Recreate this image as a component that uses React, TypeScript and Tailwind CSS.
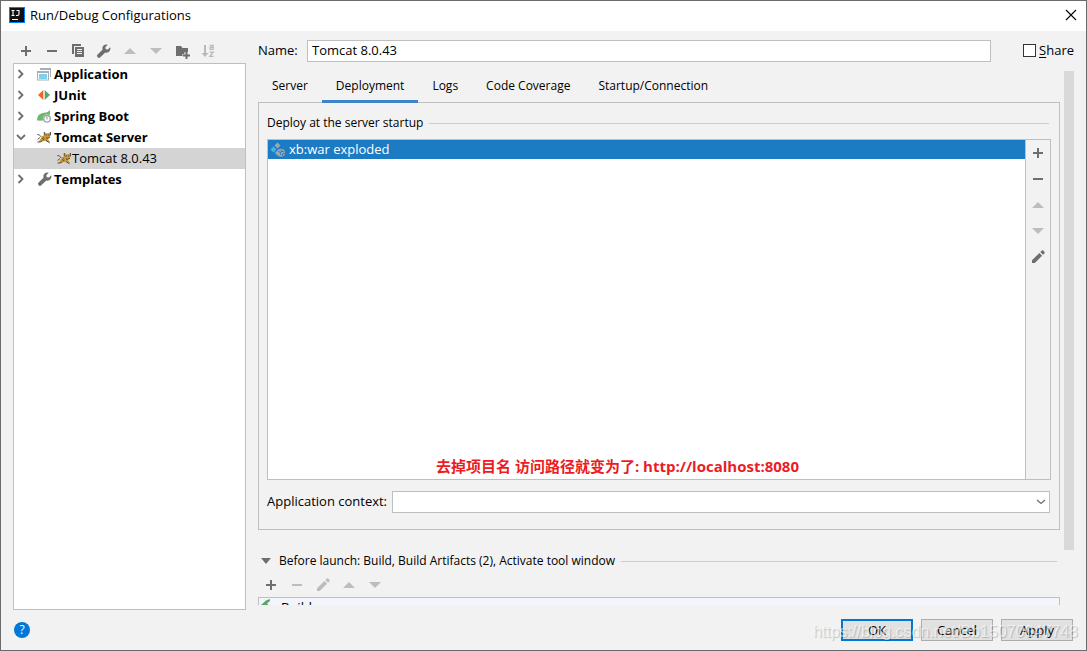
import type { ReactNode } from "react";

type IconProps = { className?: string };

function PlusIcon({ className = "text-[#6e6e6e]" }: IconProps) {
  return (
    <svg width="16" height="16" viewBox="0 0 16 16" className={className} fill="currentColor" aria-hidden="true">
      <path d="M7 3h2v4h4v2H9v4H7V9H3V7h4z" />
    </svg>
  );
}

function MinusIcon({ className = "text-[#6e6e6e]" }: IconProps) {
  return (
    <svg width="16" height="16" viewBox="0 0 16 16" className={className} fill="currentColor" aria-hidden="true">
      <path d="M3 7h10v2H3z" />
    </svg>
  );
}

function CopyIcon() {
  return (
    <svg width="16" height="16" viewBox="0 0 16 16" fill="#6e6e6e" aria-hidden="true">
      <path d="M2 1h9v2H4v8H2z" />
      <path fillRule="evenodd" d="M5 4h9v10H5zM7 6v1h5V6zm0 2v1h5V8zm0 2v1h5v-1z" />
    </svg>
  );
}

function WrenchIcon() {
  return (
    <svg width="16" height="16" viewBox="0 0 16 16" fill="#6e6e6e" aria-hidden="true">
      <path d="M14.300 4.200 11.800 6.600 9.700 6.200 9.300 4.200 11.700 1.700A4 4 0 0 0 6.500 6.700L1.600 11.600a1.900 1.900 0 0 0 2.700 2.700L9.300 9.400a4 4 0 0 0 5-5.200z" />
    </svg>
  );
}

function UpIcon({ className = "text-[#bdbdbd]" }: IconProps) {
  return (
    <svg width="16" height="16" viewBox="0 0 16 16" className={className} fill="currentColor" aria-hidden="true">
      <path d="M8 5 14 11H2z" />
    </svg>
  );
}

function DownIcon({ className = "text-[#bdbdbd]" }: IconProps) {
  return (
    <svg width="16" height="16" viewBox="0 0 16 16" className={className} fill="currentColor" aria-hidden="true">
      <path d="M8 11 14 5H2z" />
    </svg>
  );
}

function FolderPlusIcon() {
  return (
    <svg width="16" height="16" viewBox="0 0 16 16" fill="#6e6e6e" aria-hidden="true">
      <path d="M2 3h5l1.500 2H14v4h-3.500v2H8.500v2H2z" />
      <path d="M11.500 9h2v2.500H16v2h-2.500V16h-2v-2.500H9v-2h2.500z" />
    </svg>
  );
}

function SortIcon() {
  return (
    <svg width="16" height="16" viewBox="0 0 16 16" aria-hidden="true">
      <path d="M4 2h2v8h2.500L5 14 1.500 10H4z" fill="#b9b9b9" />
      <path d="M9.800 2.500h3.300v4.300M13.100 4.400h-2.900v2h2.900M9.600 9.200h3.500l-3.200 4.200h3.700" fill="none" stroke="#b9b9b9" strokeWidth="1.300" />
    </svg>
  );
}

function PencilIcon({ className = "text-[#6e6e6e]" }: IconProps) {
  return (
    <svg width="16" height="16" viewBox="0 0 16 16" className={className} fill="currentColor" aria-hidden="true">
      <path d="M2 11.200 9.400 4l2.700 2.700L4.800 14H2z" />
      <path d="m10.300 3.100 1.500-1.500q.7-.6 1.400 0l1.300 1.300q.6.700 0 1.400L13 5.800z" />
    </svg>
  );
}

function ChevronIcon({ open = false }: { open?: boolean }) {
  return (
    <svg width="10" height="10" viewBox="0 0 10 10" fill="none" stroke="#6e6e6e" strokeWidth="1.800" aria-hidden="true">
      <path d={open ? "M1 3l4 4 4-4" : "M2.500 1l4 4-4 4"} />
    </svg>
  );
}

function ApplicationIcon() {
  return (
    <svg width="14" height="14" viewBox="0 0 14 14" aria-hidden="true">
      <path d="M3 1h11v9h-1V3H3z" fill="#a5afb8" />
      <path fillRule="evenodd" d="M0 4h12v9.500H0zM1 6v6.500h10V6z" fill="#a5afb8" />
      <path d="M2 7h8v5H2z" fill="#7fd0ea" />
    </svg>
  );
}

function JUnitIcon() {
  return (
    <svg width="14" height="14" viewBox="0 0 14 14" aria-hidden="true">
      <path d="M6.300 2v10L1 7z" fill="#f26522" />
      <path d="M7.700 2v10L13 7z" fill="#59a869" />
    </svg>
  );
}

function SpringIcon() {
  return (
    <svg width="14" height="14" viewBox="0 0 14 14" aria-hidden="true">
      <path d="M12.500 1c.8 2.600.9 4.600-.7 7-2 3.200-6 4.200-11.800 3.600C0 7.500 1.500 5 5 4.200c3-.7 5.500-.2 7.500-3.200z" fill="#6cb86a" />
      <circle cx="10" cy="9.800" r="4.200" fill="#fff" />
      <circle cx="10" cy="9.800" r="3.300" fill="none" stroke="#9aa7b0" strokeWidth="1.400" />
      <path d="M10 7.500v3" stroke="#9aa7b0" strokeWidth="1.200" />
    </svg>
  );
}

function TomcatIcon() {
  return (
    <svg width="14" height="14" viewBox="0 0 14 14" aria-hidden="true">
      <path d="M7.300 2 9 3.200h2.500L13.300 2l.3 3.200-.9 2.300-1.600.8.400 2 1.700 1.500-1 .8-3-1.700-3.800.4L3.500 12H1.500l1.900-3L5 6.300l2.500-1z" fill="#c99a38" />
      <path d="M7.300 2v3.300M13.500 2v3.300M.3 4.600l2 .2 2 2.200M.5 12h2.700l2-1M9 10.500l3.500 2.300M.5 9.500l2.500-2M9 7.800l2 .5 2-1" fill="none" stroke="#4a4638" strokeWidth=".9" />
      <path d="M8.700 4.500h1v1h-1zM11.300 4.500h1v1h-1z" fill="#493b12" />
      <path d="M5.200 8.500 7 7.500M5.500 10l2-1" stroke="#6b5017" strokeWidth=".9" />
    </svg>
  );
}

function ArtifactIcon() {
  return (
    <svg width="16" height="16" viewBox="0 0 16 16" aria-hidden="true">
      <path d="m7.500.5 3 3-3 3-3-3z" fill="#9aa7b0" />
      <path d="m3.500 4.500 3 3-3 3-3-3z" fill="#40b6e0" />
      <path d="m7.500 8.300 1 1-.5 4.500-3.200-2.700z" fill="#9aa7b0" />
      <circle cx="11" cy="10.800" r="4" fill="#9aa7b0" />
      <path d="m8.300 9.500 2.500 1-.5 2.500M11.500 7.700l-.5 1.500 3 .6M12.300 14l.2-2 2-.6" fill="none" stroke="#1b7bc3" strokeWidth=".9" />
    </svg>
  );
}

function IdeaIcon() {
  return (
    <svg width="16" height="16" viewBox="0 0 16 16" aria-hidden="true">
      <path d="M0 0h16v16H0z" fill="#087cfa" />
      <path d="M1 1h14v14H1z" fill="#111" />
      <path d="M2.500 3.500h3M4 3.500v5M2.500 8.500h3M7.500 3.500h2.500v3.500q0 1.500-1.500 1.500h-1.500M3 12.500h6" fill="none" stroke="#fff" strokeWidth="1.100" />
    </svg>
  );
}

function ToolButton({ label, disabled, children }: { label: string; disabled?: boolean; children: ReactNode }) {
  return (
    <button type="button" aria-label={label} disabled={disabled} className="flex h-6 w-[26px] shrink-0 items-center justify-center">
      {children}
    </button>
  );
}

function TreeItem({ label, icon, open }: { label: string; icon: ReactNode; open?: boolean }) {
  return (
    <button type="button" aria-expanded={!!open} className="flex h-[21px] w-full items-center pb-0.5 pl-[2px] text-left text-[13px] font-bold">
      <ChevronIcon open={open} />
      <span className="ml-[11px] flex w-[17px] shrink-0">{icon}</span>
      <span>{label}</span>
    </button>
  );
}

function GroupTitle({ children }: { children: ReactNode }) {
  return (
    <div className="flex items-center gap-1.5 text-[12px] leading-4">
      <span className="whitespace-nowrap">{children}</span>
      <span className="h-px flex-1 bg-[#cdcdcd]" />
    </div>
  );
}

const tabs = ["Server", "Deployment", "Logs", "Code Coverage", "Startup/Connection"];

function Tabs() {
  return (
    <div role="tablist" className="relative -mb-px flex h-8 shrink-0 items-stretch text-[12px]">
      {tabs.map((tab) => (
        <button
          key={tab}
          type="button"
          role="tab"
          aria-selected={tab === "Deployment"}
          className={
            tab === "Deployment"
              ? "border-b-3 border-[#4083c9] px-3.5"
              : "border-b-3 border-transparent px-3.5"
          }
        >
          {tab}
        </button>
      ))}
    </div>
  );
}

function Sidebar() {
  return (
    <aside className="flex w-[233px] shrink-0 flex-col">
      <div className="flex h-8 items-end">
        <ToolButton label="Add"><PlusIcon /></ToolButton>
        <ToolButton label="Remove"><MinusIcon /></ToolButton>
        <ToolButton label="Copy"><CopyIcon /></ToolButton>
        <ToolButton label="Edit templates"><WrenchIcon /></ToolButton>
        <ToolButton label="Move up" disabled><UpIcon /></ToolButton>
        <ToolButton label="Move down" disabled><DownIcon /></ToolButton>
        <ToolButton label="Create folder"><FolderPlusIcon /></ToolButton>
        <ToolButton label="Sort" disabled><SortIcon /></ToolButton>
      </div>
      <div className="flex-1 border border-[#bfbfc3] bg-white">
        <TreeItem label="Application" icon={<ApplicationIcon />} />
        <TreeItem label="JUnit" icon={<JUnitIcon />} />
        <TreeItem label="Spring Boot" icon={<SpringIcon />} />
        <TreeItem label="Tomcat Server" icon={<TomcatIcon />} open />
        <button type="button" className="flex h-[21px] w-full items-center bg-[#d4d4d4] pb-0.5 pl-[43px] text-left">
          <TomcatIcon />
          <span className="ml-px">Tomcat 8.0.43</span>
        </button>
        <TreeItem label="Templates" icon={<WrenchIcon />} />
      </div>
    </aside>
  );
}

function DeploymentPanel() {
  return (
    <section className="border border-[#bfbfbf] px-2 pt-3 pb-4">
      <div className="pr-0.5">
        <GroupTitle>Deploy at the server startup</GroupTitle>
      </div>
      <div className="mt-2 flex h-[341px] border border-[#bfbfbf]">
        <div className="flex min-w-0 flex-1 flex-col justify-between bg-white">
          <button type="button" className="flex h-[19px] w-full items-center gap-[3px] bg-[#1b7bc3] pl-[2px] text-left leading-4 text-white">
            <ArtifactIcon />
            <span className="pb-px">xb:war exploded</span>
          </button>
          <p className="mb-0.5 pr-[58px] text-center text-[15px] leading-[22px] font-bold text-[#ed1c24]">
            去掉项目名 访问路径就变为了: http://localhost:8080
          </p>
        </div>
        <div className="flex w-[25px] flex-col items-center gap-0.5 border-l border-[#bfbfbf] pt-px">
          <ToolButton label="Add artifact"><PlusIcon /></ToolButton>
          <ToolButton label="Remove artifact"><MinusIcon /></ToolButton>
          <ToolButton label="Move artifact up" disabled><UpIcon /></ToolButton>
          <ToolButton label="Move artifact down" disabled><DownIcon /></ToolButton>
          <ToolButton label="Edit artifact"><PencilIcon /></ToolButton>
        </div>
      </div>
      <div className="mt-[11px] flex items-center pr-px">
        <label htmlFor="context" className="w-[125px] shrink-0 pb-0.5">Application context:</label>
        <div className="relative flex-1">
          <select id="context" className="block h-[22px] w-full appearance-none border border-[#bfbfbf] bg-white px-1">
            <option value=""></option>
          </select>
          <svg width="10" height="6" viewBox="0 0 10 6" className="pointer-events-none absolute top-2 right-1" fill="none" stroke="#6e6e6e" strokeWidth="1.300" aria-hidden="true">
            <path d="M1 1l4 3.500L9 1" />
          </svg>
        </div>
      </div>
    </section>
  );
}

function BeforeLaunch() {
  return (
    <section className="mt-[23px]">
      <div className="flex items-center gap-1.5 pr-[3px]">
        <button type="button" aria-label="Collapse before launch" className="flex w-[15px] justify-center">
          <svg width="10" height="6" viewBox="0 0 10 6" fill="#6e6e6e" aria-hidden="true">
            <path d="M0 0h10L5 6z" />
          </svg>
        </button>
        <div className="flex-1">
          <GroupTitle>Before launch: Build, Build Artifacts (2), Activate tool window</GroupTitle>
        </div>
      </div>
      <div className="mt-[3px] flex h-[25px] items-center">
        <ToolButton label="Add task"><PlusIcon /></ToolButton>
        <ToolButton label="Remove task" disabled><MinusIcon className="text-[#bdbdbd]" /></ToolButton>
        <ToolButton label="Edit task" disabled><PencilIcon className="text-[#bdbdbd]" /></ToolButton>
        <ToolButton label="Move task up" disabled><UpIcon /></ToolButton>
        <ToolButton label="Move task down" disabled><DownIcon /></ToolButton>
      </div>
      <div className="border border-[#bfbfbf] bg-[#f2f5fa]">
        <div className="flex h-[18px] items-center gap-2 pl-0.5">
          <svg width="12" height="16" viewBox="0 0 12 16" fill="#59a869" aria-hidden="true">
            <path d="M0 6 5 1.500 9 0v2L6 4.500 12 10l-2 2-5.500-5L2 9z" />
          </svg>
          <span>Build</span>
        </div>
      </div>
    </section>
  );
}

export default function App() {
  return (
    <div className="relative flex h-screen min-h-[400px] flex-col overflow-hidden border border-[#6b6b6b] bg-[#f2f2f2] font-['Open_Sans','Noto_Sans_CJK_SC',sans-serif] text-[13px] leading-5 text-black">
      <header className="flex h-[30px] shrink-0 items-center bg-white pr-[9px] pb-0.5 pl-2">
        <IdeaIcon />
        <h1 className="ml-[5px] flex-1 text-[13px]">Run/Debug Configurations</h1>
        <button type="button" aria-label="Close">
          <svg width="12" height="12" viewBox="0 0 12 12" stroke="#000" strokeWidth="1.100" aria-hidden="true">
            <path d="M1 1l10 10M11 1L1 11" />
          </svg>
        </button>
      </header>

      <div className="flex min-h-0 flex-1 gap-3 px-3">
        <Sidebar />
        <main className="flex min-w-0 flex-1 flex-col">
          <div className="flex h-10 shrink-0 items-center">
            <label htmlFor="name" className="w-[49px] shrink-0 pb-0.5">Name:</label>
            <input id="name" defaultValue="Tomcat 8.0.43" className="h-[22px] min-w-0 flex-1 border border-[#bfbfbf] bg-white px-1 pb-0.5" />
            <label className="ml-8 flex items-center gap-[3px] pb-0.5">
              <input type="checkbox" className="size-[13px] appearance-none border border-[#333] bg-white" />
              <span><u className="underline-offset-2">S</u>hare</span>
            </label>
          </div>
          <div className="flex min-h-0 flex-1 gap-1 overflow-hidden">
            <div className="flex min-w-0 flex-1 flex-col">
              <Tabs />
              <DeploymentPanel />
              <BeforeLaunch />
            </div>
            <div className="h-[479px] w-2.5 bg-[#d9d9d9]" />
          </div>
          <div className="h-[5px] shrink-0" />
        </main>
      </div>

      <footer className="flex h-10 shrink-0 items-center gap-2 px-[13px]">
        <button type="button" aria-label="Help" className="mr-auto flex size-4 items-center justify-center rounded-full bg-[#0078d7] text-[12px] leading-4 text-white">
          ?
        </button>
        <button type="button" className="h-[22px] w-[72px] border-2 border-[#0078d7] bg-[#e1e1e1] leading-4">OK</button>
        <button type="button" className="h-[22px] w-[72px] border border-[#adadad] bg-[#e1e1e1] leading-4">Cancel</button>
        <button type="button" className="h-[22px] w-[72px] border border-[#adadad] bg-[#e1e1e1] leading-4">Apply</button>
      </footer>

      <span className="pointer-events-none absolute right-2 bottom-2 font-['Liberation_Sans',sans-serif] text-[16px] text-white/60 [text-shadow:1px_1px_1px_#0003]">
        https://blog.csdn.net/Bb15070047748
      </span>
    </div>
  );
}
